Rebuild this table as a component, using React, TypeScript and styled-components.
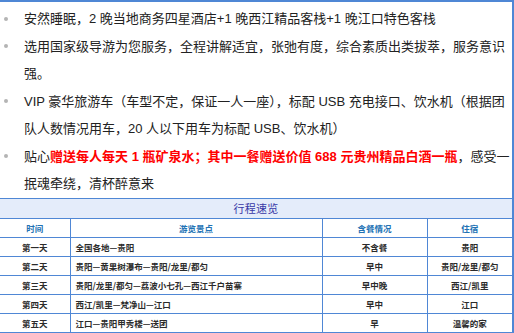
import * as React from "react";
import styled, { createGlobalStyle } from "styled-components";

const GlobalStyle = createGlobalStyle`
  body {
    margin: 0;
    background: #ffffff;
  }
`;

const BORDER = "#4f87d5";

const Frame = styled.div`
  width: 514px;
  height: 333px;
  box-sizing: border-box;
  border-top: 2px solid ${BORDER};
  border-right: 2px solid ${BORDER};
  overflow: hidden;
  background: #fff;
  font-family: "Liberation Sans", "Noto Sans CJK SC", sans-serif;
`;

const Bullets = styled.ul`
  list-style: none;
  margin: 0;
  padding: 3px 0 0;
`;

const Item = styled.li`
  display: grid;
  grid-template-columns: 24px 1fr;
  font-size: 13px;
  line-height: 27.5px;
  color: #222;
`;

const Dot = styled.span`
  height: 27.5px;
  display: flex;
  align-items: center;
  &::after {
    content: "";
    width: 4px;
    height: 4px;
    margin-left: 4px;
    border-radius: 50%;
    background: #b4b4b4;
  }
`;

const Line = styled.div`
  white-space: nowrap;
`;

const Red = styled.strong`
  color: #ff0000;
  font-weight: bold;
`;

const Schedule = styled.table`
  width: 512px;
  border-collapse: collapse;
  table-layout: fixed;
  font-family: "Noto Sans CJK SC", sans-serif;
`;

const Cell = styled.td<{ $align?: "left" | "center"; $head?: boolean }>`
  height: 18px;
  padding: 0 ${p => (p.$align === "left" ? "5px" : "0")};
  border: 1px solid ${BORDER};
  text-align: ${p => p.$align || "center"};
  font-size: 8.5px;
  font-weight: bold;
  color: ${p => (p.$head ? "#2272b4" : "#2b2b2b")};
  white-space: nowrap;
  &:first-child {
    border-left: none;
  }
  &:last-child {
    border-right: none;
  }
`;

const TitleCell = styled.td`
  height: 19px;
  padding: 0;
  border-top: 1px solid ${BORDER};
  border-bottom: 1px solid ${BORDER};
  background: #e4ecfa;
  text-align: center;
  font-size: 11px;
  color: #3838a6;
  letter-spacing: 0.3px;
`;

const days = [
  ["第一天", "全国各地—贵阳", "不含餐", "贵阳"],
  ["第二天", "贵阳—黄果树瀑布—贵阳/龙里/都匀", "早中", "贵阳/龙里/都匀"],
  ["第三天", "贵阳/龙里/都匀—荔波小七孔—西江千户苗寨", "早中晚", "西江/凯里"],
  ["第四天", "西江/凯里—梵净山—江口", "早中", "江口"],
  ["第五天", "江口—贵阳甲秀楼—送团", "早", "温馨的家"],
];

const App = () => (
  <Frame>
    <GlobalStyle />
    <Bullets>
      <Item>
        <Dot />
        <Line>安然睡眠，2 晚当地商务四星酒店+1 晚西江精品客栈+1 晚江口特色客栈</Line>
      </Item>
      <Item>
        <Dot />
        <div>
          <Line>选用国家级导游为您服务，全程讲解适宜，张弛有度，综合素质出类拔萃，服务意识</Line>
          <Line>强。</Line>
        </div>
      </Item>
      <Item>
        <Dot />
        <div>
          <Line>VIP 豪华旅游车（车型不定，保证一人一座），标配 USB 充电接口、饮水机（根据团</Line>
          <Line>队人数情况用车，20 人以下用车为标配 USB、饮水机）</Line>
        </div>
      </Item>
      <Item>
        <Dot />
        <div>
          <Line>
            贴心<Red>赠送每人每天 1 瓶矿泉水；其中一餐赠送价值 688 元贵州精品白酒一瓶</Red>，感受一
          </Line>
          <Line>抿魂牵绕，清杯醉意来</Line>
        </div>
      </Item>
    </Bullets>
    <Schedule>
      <colgroup>
        <col style={{ width: 70 }} />
        <col style={{ width: 252 }} />
        <col style={{ width: 105 }} />
        <col style={{ width: 85 }} />
      </colgroup>
      <tbody>
        <tr>
          <TitleCell colSpan={4}>行程速览</TitleCell>
        </tr>
        <tr>
          <Cell $head>时间</Cell>
          <Cell $head>游览景点</Cell>
          <Cell $head>含餐情况</Cell>
          <Cell $head>住宿</Cell>
        </tr>
        {days.map(d => (
          <tr key={d[0]}>
            <Cell>{d[0]}</Cell>
            <Cell $align="left">{d[1]}</Cell>
            <Cell>{d[2]}</Cell>
            <Cell>{d[3]}</Cell>
          </tr>
        ))}
      </tbody>
    </Schedule>
  </Frame>
);

export default App;
